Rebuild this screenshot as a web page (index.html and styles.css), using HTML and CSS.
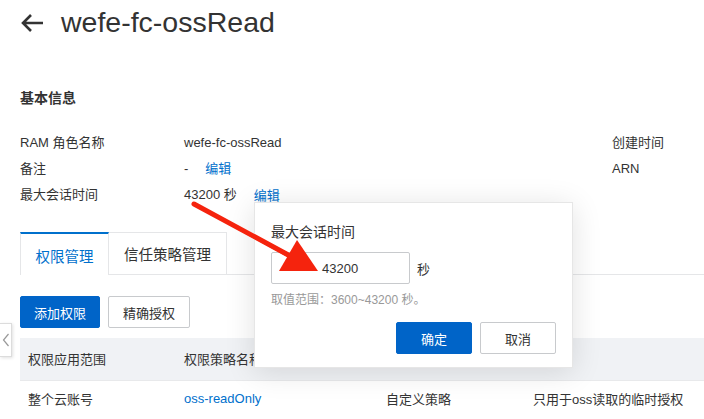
FILE: index.html
```html
<!DOCTYPE html>
<html lang="zh-CN">
<head>
<meta charset="utf-8">
<title>wefe-fc-ossRead</title>
<link rel="stylesheet" href="styles.css">
</head>
<body>
<div class="page">
  <header class="page-header">
    <svg class="back" width="24" height="20" viewBox="0 0 24 20"><path d="M23 10H3M11 2L3 10l8 8" fill="none" stroke="#333" stroke-width="2.6"/></svg>
    <h1 class="title">wefe-fc-ossRead</h1>
  </header>

  <h2 class="section-title">基本信息</h2>

  <div class="info">
    <div class="label">RAM 角色名称</div><div class="value">wefe-fc-ossRead</div><div class="label">创建时间</div>
    <div class="label">备注</div><div class="value">-<a class="link edit1">编辑</a></div><div class="label">ARN</div>
    <div class="label">最大会话时间</div><div class="value">43200 秒<a class="link edit2">编辑</a></div><div></div>
  </div>

  <div class="tabs">
    <div class="tab active">权限管理</div>
    <div class="tab">信任策略管理</div>
    <div class="tab-rest"></div>
  </div>

  <div class="actions">
    <button class="btn primary">添加权限</button>
    <button class="btn">精确授权</button>
  </div>

  <div class="table">
    <div class="row head">
      <div class="c1">权限应用范围</div><div class="c2">权限策略名称</div><div class="c3">策略类型</div><div class="c4">备注</div>
    </div>
    <div class="row body">
      <div class="c1">整个云账号</div><div class="c2"><a class="link">oss-readOnly</a></div><div class="c3">自定义策略</div><div class="c4">只用于oss读取的临时授权</div>
    </div>
  </div>
</div>

<div class="collapse"><svg width="8" height="14" viewBox="0 0 8 14"><path d="M6.5 1L1.5 7l5 6" fill="none" stroke="#999" stroke-width="1.2"/></svg></div>

<div class="popover">
  <div class="pop-title">最大会话时间</div>
  <div class="pop-field">
    <div class="input">43200</div><span class="unit">秒</span>
  </div>
  <div class="hint">取值范围：3600~43200 秒。</div>
  <div class="pop-actions">
    <button class="btn primary wide">确定</button>
    <button class="btn wide">取消</button>
  </div>
</div>

<svg class="red-arrow" width="704" height="419" viewBox="0 0 704 419">
  <path d="M192 202 L195 206 L291 259 L287 252 Z" fill="#f5230d"/>
  <line x1="194" y1="204" x2="292" y2="257" stroke="#f5230d" stroke-width="5" stroke-linecap="round"/>
  <polygon points="297,240 279,271 318,271" fill="#f5230d"/>
</svg>
</body>
</html>
```
FILE: styles.css
```css
* { box-sizing: border-box; }
html, body { margin: 0; padding: 0; background: #fff; }
body {
  width: 704px; height: 419px; overflow: hidden; position: relative;
  font-family: "Liberation Sans", "Noto Sans CJK SC", sans-serif;
  color: #333; font-size: 13px;
}
.page { padding-left: 20px; }
.page-header { display: flex; align-items: center; height: 44px; gap: 17px; }
.back { display: block; margin-top: 1px; }
.title { margin: 0; font-size: 28.5px; font-weight: normal; color: #333; line-height: 44px; }
.section-title { margin: 45px 0 0; font-size: 14px; font-weight: 600; line-height: 18px; color: #333; }
.info {
  margin-top: 23px;
  display: grid; grid-template-columns: 164px 428px 1fr; grid-auto-rows: 26px;
  align-items: center; line-height: 18px;
}
.link { color: #0070cc; text-decoration: none; }
.edit1 { margin-left: 17px; }
.edit2 { margin-left: 17px; position: relative; top: 1px; }
.tabs { display: flex; margin-top: 24px; height: 43px; }
.tab {
  height: 43px; border: 1px solid #e5e6e8; border-left: none;
  display: flex; align-items: center; justify-content: center;
  font-size: 14.5px; color: #333; background: #fff;
}
.tab.active {
  width: 89px; border-left: 1px solid #e5e6e8; border-top: 2px solid #0070cc;
  border-bottom: none; color: #0070cc; padding-top: 1px;
}
.tab:nth-child(2) { width: 118px; }
.tab-rest { flex: 1; border-bottom: 1px solid #e5e6e8; }
.actions { display: flex; gap: 8px; margin-top: 21px; }
.btn {
  height: 32px; padding: 0; border: 1px solid #c8cacd; background: #fff; border-radius: 2px;
  font-family: inherit; font-size: 13px; color: #333; width: 82px;
}
.btn.primary { background: #0064c8; border-color: #0064c8; color: #fff; width: 80px; }
.table { margin-top: 10px; }
.row { display: grid; grid-template-columns: 156px 202px 147px 1fr; height: 43px; align-items: center; padding-left: 8px; }
.row.head { background: #f0f2f5; border-bottom: 1px solid #e8e9eb; padding-bottom: 2px; }
.row.body { height: 35px; }
.row > div { white-space: nowrap; }
.collapse {
  position: absolute; left: 0; top: 323px; width: 12px; height: 34px;
  background: #fff; border: 1px solid #dcdcdc; border-left: none;
  box-shadow: 1px 1px 3px rgba(0,0,0,.12);
  display: flex; align-items: center; justify-content: center;
}
.popover {
  position: absolute; left: 254px; top: 202px; width: 319px; height: 166px;
  background: #fff; border: 1px solid #e6e6e6;
  box-shadow: 0 4px 28px rgba(0,0,0,.12);
  padding: 20px 16px 0 16px;
}
.pop-title { font-size: 14px; line-height: 18px; }
.pop-field { display: flex; align-items: center; margin-top: 11px; gap: 7px; }
.input {
  width: 139px; height: 32px; border: 1px solid #c8cacd; border-radius: 2px;
  display: flex; align-items: center; padding-left: 50px; font-size: 13px;
}
.unit { font-size: 13px; }
.hint { margin-top: 8px; font-size: 12px; color: #999; line-height: 16px; }
.pop-actions { display: flex; justify-content: flex-end; gap: 8px; margin-top: 14px; }
.btn.wide { width: 76px; }
.red-arrow { position: absolute; left: 0; top: 0; pointer-events: none; }
```
